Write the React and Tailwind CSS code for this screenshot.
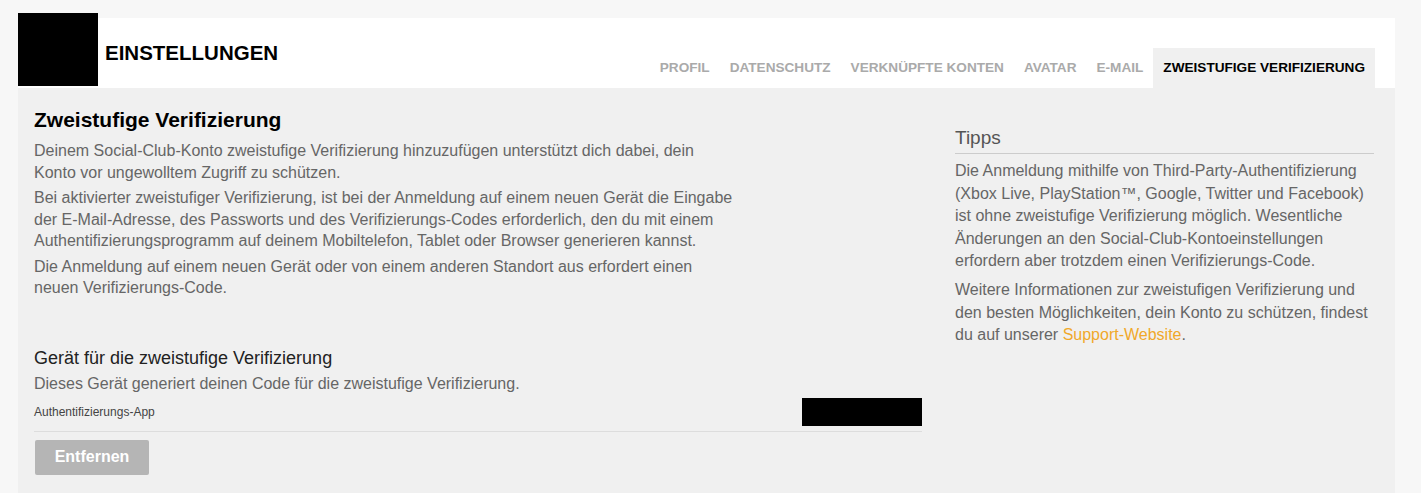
const tabs = ['PROFIL', 'DATENSCHUTZ', 'VERKNÜPFTE KONTEN', 'AVATAR', 'E-MAIL'];

export default function App() {
  return (
    <div className="min-h-[493px] bg-[#f7f7f7] pt-[18px] pl-[18px] pr-[26px] font-['Liberation_Sans',Arial,sans-serif]">
      {/* header */}
      <div className="relative flex h-[70px] items-end justify-between bg-white pr-[20px]">
        <div className="absolute left-0 top-[-5px] h-[73px] w-[80px] bg-black" />
        <h1 className="mb-[25px] ml-[87px] text-[20.5px] font-bold leading-none text-black">EINSTELLUNGEN</h1>
        <nav className="flex h-[40px] items-stretch">
          {tabs.map((t) => (
            <span key={t} className="flex items-center px-[10px] text-[13.6px] font-bold text-[#aaaaaa]">
              {t}
            </span>
          ))}
          <span className="flex items-center bg-[#f0f0f0] px-[10px] text-[13.6px] font-bold text-black">
            ZWEISTUFIGE VERIFIZIERUNG
          </span>
        </nav>
      </div>

      {/* content */}
      <div className="flex min-h-[405px] bg-[#f0f0f0] pl-[16px] pr-[21px]">
        <div className="w-[888px] pt-[20px]">
          <h2 className="text-[21px] font-bold leading-[24px] text-black">Zweistufige Verifizierung</h2>
          <div className="mt-[8px] space-y-[4px] text-[16px] leading-[21.5px] text-[#666666]">
            <p>
              Deinem Social-Club-Konto zweistufige Verifizierung hinzuzufügen unterstützt dich dabei, dein
              <br />
              Konto vor ungewolltem Zugriff zu schützen.
            </p>
            <p>
              Bei aktivierter zweistufiger Verifizierung, ist bei der Anmeldung auf einem neuen Gerät die Eingabe
              <br />
              der E-Mail-Adresse, des Passworts und des Verifizierungs-Codes erforderlich, den du mit einem
              <br />
              Authentifizierungsprogramm auf deinem Mobiltelefon, Tablet oder Browser generieren kannst.
            </p>
            <p>
              Die Anmeldung auf einem neuen Gerät oder von einem anderen Standort aus erfordert einen
              <br />
              neuen Verifizierungs-Code.
            </p>
          </div>

          <h3 className="mt-[48px] text-[18px] leading-[22px] text-[#222222]">Gerät für die zweistufige Verifizierung</h3>
          <p className="mt-[5px] text-[16px] leading-[20px] text-[#666666]">
            Dieses Gerät generiert deinen Code für die zweistufige Verifizierung.
          </p>
          <div className="mt-[4px] flex items-center justify-between border-b border-[#dddddd] pb-[5px]">
            <span className="text-[12px] text-[#444444]">Authentifizierungs-App</span>
            <div className="h-[28px] w-[120px] bg-black" />
          </div>
          <button className="mt-[8px] ml-[1px] h-[35px] w-[114px] rounded-[2px] bg-[#b5b5b5] text-[16px] font-bold text-white">
            Entfernen
          </button>
        </div>

        <aside className="ml-[33px] w-[419px] pt-[38px]">
          <h2 className="border-b border-[#cccccc] pb-[3px] text-[19px] leading-[24px] text-[#555555]">Tipps</h2>
          <div className="mt-[6px] space-y-[6px] text-[16px] leading-[22.6px] text-[#666666]">
            <p>
              Die Anmeldung mithilfe von Third-Party-Authentifizierung (Xbox Live, PlayStation™, Google, Twitter und
              Facebook) ist ohne zweistufige Verifizierung möglich. Wesentliche Änderungen an den
              Social-Club-Kontoeinstellungen erfordern aber trotzdem einen Verifizierungs-Code.
            </p>
            <p>
              Weitere Informationen zur zweistufigen Verifizierung und den besten Möglichkeiten, dein Konto zu
              schützen, findest du auf unserer <a className="text-[#f0a82a]">Support-Website</a>.
            </p>
          </div>
        </aside>
      </div>
    </div>
  );
}
